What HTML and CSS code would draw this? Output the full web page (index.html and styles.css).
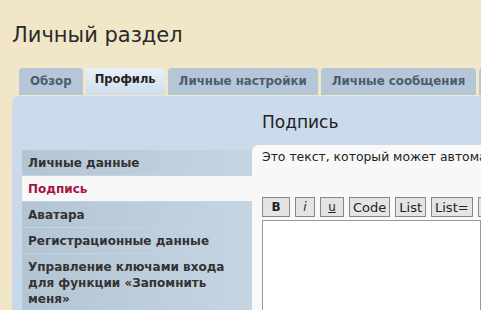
FILE: index.html
```html
<!DOCTYPE html>
<html lang="ru">
<head>
<meta charset="utf-8">
<title>Личный раздел</title>
<link rel="stylesheet" href="styles.css">
</head>
<body>
<h1 class="title">Личный раздел</h1>
<nav class="tabs">
  <a class="tab">Обзор</a>
  <a class="tab tab-active">Профиль</a>
  <a class="tab">Личные настройки</a>
  <a class="tab">Личные сообщения</a>
  <a class="tab">Друзья</a>
</nav>
<div class="panel">
  <aside class="side">
    <ul class="menu">
      <li class="item">Личные данные</li>
      <li class="item item-active">Подпись</li>
      <li class="item">Аватара</li>
      <li class="item">Регистрационные данные</li>
      <li class="item">Управление ключами входа для функции «Запомнить меня»</li>
    </ul>
  </aside>
  <main class="main">
    <h2 class="heading">Подпись</h2>
    <div class="box">
      <p class="desc">Это текст, который может автоматически добавляться к вашим сообщениям.</p>
      <div class="toolbar">
        <button class="btn btn-b">B</button>
        <button class="btn btn-i">i</button>
        <button class="btn btn-u">u</button>
        <button class="btn">Code</button>
        <button class="btn">List</button>
        <button class="btn">List=</button>
        <button class="btn">[*]</button>
      </div>
      <div class="editor"></div>
    </div>
  </main>
</div>
</body>
</html>
```
FILE: styles.css
```css
html, body {
  margin: 0;
  padding: 0;
}
body {
  background: #f1e6c8;
  font-family: "DejaVu Sans", Verdana, sans-serif;
  color: #333;
  width: 481px;
  height: 310px;
  overflow: hidden;
  padding-left: 12px;
  box-sizing: border-box;
}
.title {
  margin: 0;
  padding-top: 21px;
  font-size: 21px;
  font-weight: normal;
  line-height: 28px;
  color: #2a2a2a;
  white-space: nowrap;
}
.tabs {
  display: flex;
  gap: 3px;
  margin-top: 19px;
  padding-left: 7px;
  white-space: nowrap;
  overflow: hidden;
}
.tab {
  display: block;
  flex: none;
  height: 27px;
  line-height: 27px;
  padding: 0 11px;
  font-size: 11.8px;
  font-weight: bold;
  color: #4e5d6c;
  background: #b5c7d7;
  border-radius: 4px 4px 0 0;
}
.tab-active {
  background: linear-gradient(#eaf1f8, #cfdeec);
  color: #222;
  height: 29px;
  margin-top: -2px;
  padding: 0 9px;
  font-size: 11.5px;
}
.panel {
  display: flex;
  background: linear-gradient(#cbdbeb, #c6d7e8);
  border-radius: 6px 0 0 0;
  height: 300px;
  padding-left: 10px;
  margin-top: 1px;
}
.side {
  width: 230px;
  flex: none;
  padding-top: 54px;
}
.menu {
  list-style: none;
  margin: 0;
  padding: 0;
}
.item {
  font-size: 12px;
  font-weight: bold;
  line-height: 16px;
  padding: 5px 6px 4px 6px;
  color: #333;
  background: linear-gradient(to right, #b3c4d3, #c5d5e3);
  border-bottom: 1px solid #c4d3e0;
}
.item-active {
  background: #f8f8f8;
  color: #a3143f;
}
.main {
  flex: 1;
  min-width: 0;
  overflow: hidden;
}
.heading {
  margin: 0;
  padding: 17px 0 0 10px;
  height: 32px;
  box-sizing: border-box;
  font-size: 17px;
  font-weight: normal;
  line-height: 18px;
  color: #222;
  white-space: nowrap;
}
.box {
  margin-top: 17px;
  background: #f8f8f8;
  border-radius: 6px 0 0 0;
  padding: 4px 0 0 10px;
  height: 200px;
}
.desc {
  margin: 0;
  font-size: 12.4px;
  line-height: 16px;
  white-space: nowrap;
  color: #222;
}
.toolbar {
  display: flex;
  gap: 5px;
  margin-top: 32px;
  white-space: nowrap;
}
.btn {
  flex: none;
  height: 20px;
  padding: 0 3px;
  font-family: "DejaVu Sans", Verdana, sans-serif;
  font-size: 13px;
  color: #222;
  background: #e4e4e4;
  border: 1px solid #888;
  border-radius: 0;
}
.btn-b {
  font-weight: bold;
  font-size: 12px;
  width: 28px;
}
.btn-i {
  font-style: italic;
  font-size: 12px;
  width: 20px;
}
.btn-u {
  text-decoration: underline;
  font-size: 12px;
  width: 24px;
}
.editor {
  margin-top: 3px;
  height: 120px;
  background: #fff;
  border: 1px solid #999;
}
```
